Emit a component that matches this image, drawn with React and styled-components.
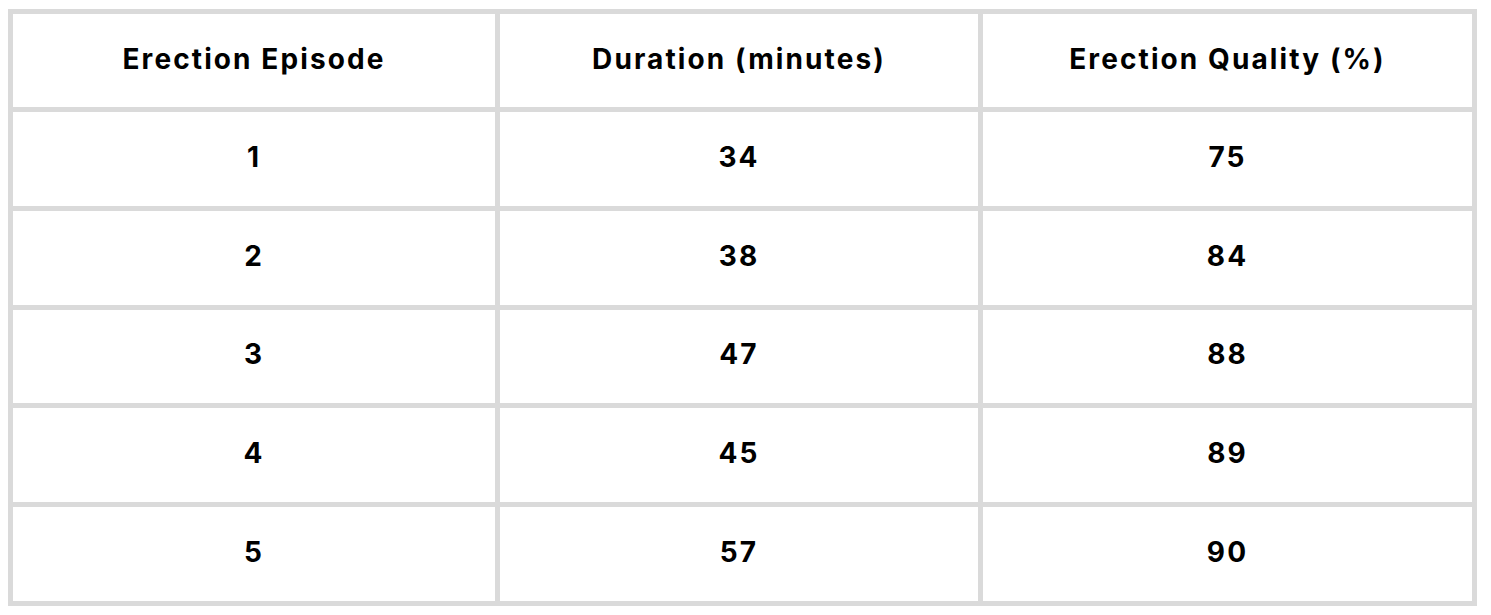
import React from "react";
import styled, { createGlobalStyle } from "styled-components";

const GlobalStyle = createGlobalStyle`
  body {
    margin: 8px;
    background: #fff;
    font-family: Inter, "Liberation Sans", sans-serif;
  }
`;

const Table = styled.table`
  width: 1469px;
  border-collapse: collapse;
  table-layout: fixed;
  color: #000;
  margin-top: 1px;
`;

const Cell = styled.td`
  border: 5px solid #dadada;
  height: 89.8px;
  padding: 0 0 4px;
  text-align: center;
  vertical-align: middle;
  font-family: Inter, "Liberation Sans", sans-serif;
  font-size: 28px;
  font-weight: 700;
  letter-spacing: 2.1px;
  line-height: 1;
`;

const HeadCell = styled(Cell).attrs({ as: "th" })`
  height: 89px;
`;

const columns = [
  { label: "Erection Episode", width: 487 },
  { label: "Duration (minutes)", width: 483 },
  { label: "Erection Quality (%)", width: 494 },
];

const rows = [
  [1, 34, 75],
  [2, 38, 84],
  [3, 47, 88],
  [4, 45, 89],
  [5, 57, 90],
];

const App = () => {
  return (
    <>
      <GlobalStyle />
      <Table>
        <colgroup>
          {columns.map((col) => (
            <col key={col.label} style={{ width: col.width }} />
          ))}
        </colgroup>
        <thead>
          <tr>
            {columns.map((col) => (
              <HeadCell key={col.label}>{col.label}</HeadCell>
            ))}
          </tr>
        </thead>
        <tbody>
          {rows.map((row) => (
            <tr key={row[0]}>
              {row.map((value, i) => (
                <Cell key={i}>{value}</Cell>
              ))}
            </tr>
          ))}
        </tbody>
      </Table>
    </>
  );
};

export default App;
